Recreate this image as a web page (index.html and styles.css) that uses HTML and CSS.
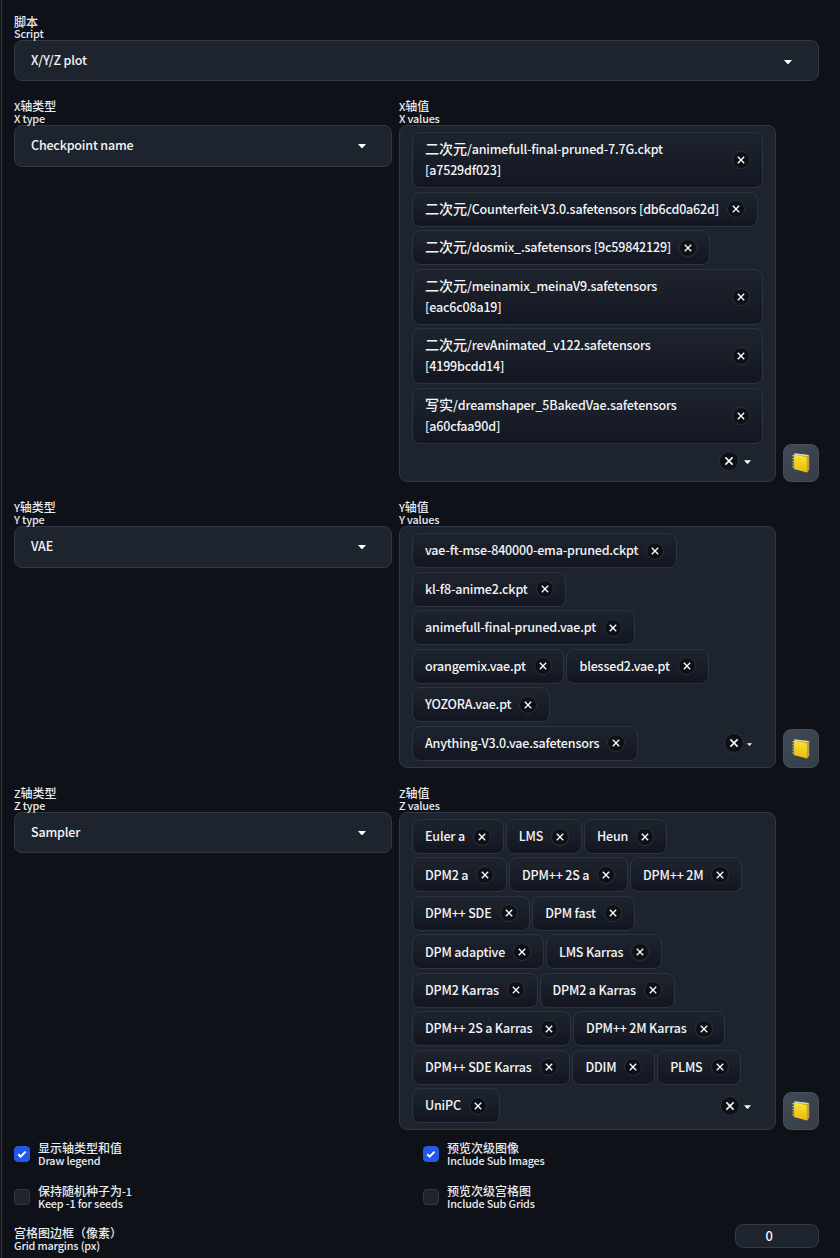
FILE: index.html
```html
<!DOCTYPE html>
<html lang="zh-CN">
<head>
<meta charset="utf-8">
<title>X/Y/Z plot</title>
<link rel="stylesheet" href="styles.css">
</head>
<body>
<svg class="defs" width="0" height="0" aria-hidden="true">
  <defs>
    <linearGradient id="cover" x1="0" y1="0" x2="0" y2="1"><stop offset="0" stop-color="#fbe632"/><stop offset="1" stop-color="#e6b80e"/></linearGradient>
    <symbol id="x" viewBox="0 0 18 18"><path d="M5.4 5.4l7.2 7.2M12.6 5.4l-7.2 7.2" fill="none" stroke="#fff" stroke-width="1.5"/></symbol>
    <symbol id="caret" viewBox="0 0 8 4"><path d="M0 0h8L4.7 3.7q-.7.6-1.4 0z" fill="#fff"/></symbol>
    <symbol id="book" viewBox="0 0 20 22">
      <path d="M4 1.5l14.2 1.7v14.6l-2.8 3z" fill="#a88a1c"/>
      <path d="M3.5 1.2l14.6 1.9-.9 1.5-14-1.9z" fill="#d0d3c6"/>
      <path d="M16 4.4l2.1-1.2v14.6l-2.2 2.6z" fill="#b9a150"/>
      <path d="M2.7 2.6l13.2 2.3v15.6L2.7 16.9z" fill="url(#cover)"/>
      <path d="M1 3.6h2.6M1 6.4h2.6M1 9.2h2.6M1 12h2.6M1 14.8h2.6" stroke="#a5a68c" stroke-width="1" fill="none"/>
    </symbol>
  </defs>
</svg>
<main class="panel">
  <section class="field script">
    <div class="label"><span><b>脚本</b></span><span>Script</span></div>
    <div class="select">X/Y/Z plot<svg class="caret"><use href="#caret"/></svg></div>
  </section>

  <section class="axis axis-x">
    <div class="field">
      <div class="label"><span>X<b>轴类型</b></span><span>X type</span></div>
      <div class="select">Checkpoint name<svg class="caret"><use href="#caret"/></svg></div>
    </div>
    <div class="field">
      <div class="label"><span>X<b>轴值</b></span><span>X values</span></div>
      <div class="values">
        <div class="row"><div class="chip wide"><span><b>二次元</b>/animefull-final-pruned-7.7G.ckpt<br>[a7529df023]</span><svg class="x"><use href="#x"/></svg></div></div>
        <div class="row"><div class="chip"><span><b>二次元</b>/Counterfeit-V3.0.safetensors [db6cd0a62d]</span><svg class="x"><use href="#x"/></svg></div></div>
        <div class="row"><div class="chip"><span><b>二次元</b>/dosmix_.safetensors [9c59842129]</span><svg class="x"><use href="#x"/></svg></div></div>
        <div class="row"><div class="chip wide"><span><b>二次元</b>/meinamix_meinaV9.safetensors<br>[eac6c08a19]</span><svg class="x"><use href="#x"/></svg></div></div>
        <div class="row"><div class="chip wide"><span><b>二次元</b>/revAnimated_v122.safetensors<br>[4199bcdd14]</span><svg class="x"><use href="#x"/></svg></div></div>
        <div class="row"><div class="chip wide"><span><b>写实</b>/dreamshaper_5BakedVae.safetensors<br>[a60cfaa90d]</span><svg class="x"><use href="#x"/></svg></div></div>
        <div class="row tail"><div class="controls"><svg class="x clear"><use href="#x"/></svg><svg class="caret"><use href="#caret"/></svg></div></div>
      </div>
    </div>
    <button class="fill"><svg class="book"><use href="#book"/></svg></button>
  </section>

  <section class="axis axis-y">
    <div class="field">
      <div class="label"><span>Y<b>轴类型</b></span><span>Y type</span></div>
      <div class="select">VAE<svg class="caret"><use href="#caret"/></svg></div>
    </div>
    <div class="field">
      <div class="label"><span>Y<b>轴值</b></span><span>Y values</span></div>
      <div class="values">
        <div class="row"><div class="chip">vae-ft-mse-840000-ema-pruned.ckpt<svg class="x"><use href="#x"/></svg></div></div>
        <div class="row"><div class="chip">kl-f8-anime2.ckpt<svg class="x"><use href="#x"/></svg></div></div>
        <div class="row"><div class="chip">animefull-final-pruned.vae.pt<svg class="x"><use href="#x"/></svg></div></div>
        <div class="row"><div class="chip">orangemix.vae.pt<svg class="x"><use href="#x"/></svg></div><div class="chip">blessed2.vae.pt<svg class="x"><use href="#x"/></svg></div></div>
        <div class="row"><div class="chip">YOZORA.vae.pt<svg class="x"><use href="#x"/></svg></div></div>
        <div class="row"><div class="chip">Anything-V3.0.vae.safetensors<svg class="x"><use href="#x"/></svg></div><div class="controls tight"><svg class="x clear"><use href="#x"/></svg><svg class="caret"><use href="#caret"/></svg></div></div>
      </div>
    </div>
    <button class="fill"><svg class="book"><use href="#book"/></svg></button>
  </section>

  <section class="axis axis-z">
    <div class="field">
      <div class="label"><span>Z<b>轴类型</b></span><span>Z type</span></div>
      <div class="select">Sampler<svg class="caret"><use href="#caret"/></svg></div>
    </div>
    <div class="field">
      <div class="label"><span>Z<b>轴值</b></span><span>Z values</span></div>
      <div class="values">
        <div class="row"><div class="chip">Euler a<svg class="x"><use href="#x"/></svg></div><div class="chip">LMS<svg class="x"><use href="#x"/></svg></div><div class="chip">Heun<svg class="x"><use href="#x"/></svg></div></div>
        <div class="row"><div class="chip">DPM2 a<svg class="x"><use href="#x"/></svg></div><div class="chip">DPM++ 2S a<svg class="x"><use href="#x"/></svg></div><div class="chip">DPM++ 2M<svg class="x"><use href="#x"/></svg></div></div>
        <div class="row"><div class="chip">DPM++ SDE<svg class="x"><use href="#x"/></svg></div><div class="chip">DPM fast<svg class="x"><use href="#x"/></svg></div></div>
        <div class="row"><div class="chip">DPM adaptive<svg class="x"><use href="#x"/></svg></div><div class="chip">LMS Karras<svg class="x"><use href="#x"/></svg></div></div>
        <div class="row"><div class="chip">DPM2 Karras<svg class="x"><use href="#x"/></svg></div><div class="chip">DPM2 a Karras<svg class="x"><use href="#x"/></svg></div></div>
        <div class="row"><div class="chip">DPM++ 2S a Karras<svg class="x"><use href="#x"/></svg></div><div class="chip">DPM++ 2M Karras<svg class="x"><use href="#x"/></svg></div></div>
        <div class="row"><div class="chip">DPM++ SDE Karras<svg class="x"><use href="#x"/></svg></div><div class="chip">DDIM<svg class="x"><use href="#x"/></svg></div><div class="chip">PLMS<svg class="x"><use href="#x"/></svg></div></div>
        <div class="row"><div class="chip">UniPC<svg class="x"><use href="#x"/></svg></div><div class="controls"><svg class="x clear"><use href="#x"/></svg><svg class="caret"><use href="#caret"/></svg></div></div>
      </div>
    </div>
    <button class="fill"><svg class="book"><use href="#book"/></svg></button>
  </section>

  <section class="checks">
    <div class="check"><span class="box on"><svg viewBox="0 0 16 16"><path d="M4.3 8.3l2.3 2.3 5-5" fill="none" stroke="#fff" stroke-width="2"/></svg></span><div class="label"><span><b>显示轴类型和值</b></span><span>Draw legend</span></div></div>
    <div class="check"><span class="box on"><svg viewBox="0 0 16 16"><path d="M4.3 8.3l2.3 2.3 5-5" fill="none" stroke="#fff" stroke-width="2"/></svg></span><div class="label"><span><b>预览次级图像</b></span><span>Include Sub Images</span></div></div>
    <div class="check"><span class="box"></span><div class="label"><span><b>保持随机种子为</b>-1</span><span>Keep -1 for seeds</span></div></div>
    <div class="check"><span class="box"></span><div class="label"><span><b>预览次级宫格图</b></span><span>Include Sub Grids</span></div></div>
  </section>

  <section class="margins">
    <div class="label"><span><b>宫格图边框（像素）</b></span><span>Grid margins (px)</span></div>
    <div class="number">0</div>
  </section>
</main>
</body>
</html>
```

FILE: styles.css
```css
* { box-sizing: border-box; }
body {
  margin: 0;
  background: #0e1118;
  color: #f3f4f6;
  font: 500 12.5px/21px "Noto Sans CJK SC", sans-serif;
  letter-spacing: -0.18px;
}
/* Chinese runs are set one step larger than the Latin text beside them. */
b { font-weight: 500; font-size: 14px; line-height: 1; letter-spacing: 0; }
.defs { display: block; }
.panel {
  height: 1258px;
  margin-left: 1px;
  padding: 16px 21px 0 12px;
  border-left: 1px solid #303744;
  overflow: hidden;
}
.label {
  display: flex;
  flex-direction: column;
  font-size: 10.8px;
  line-height: 12px;
  letter-spacing: -0.16px;
  color: #e9ebee;
  white-space: nowrap;
}
.label span { height: 12px; }
.label span:last-child { line-height: 10.5px; }
.margins .label span:last-child { line-height: 12px; }
.label b { font-size: 12px; line-height: 0; }
.label span:first-child { line-height: 13px; }
.axis .label span:first-child,
.check .label span:first-child { line-height: 11px; }
.script { height: 85px; }
.script .select { height: 41px; }
.select {
  display: flex;
  align-items: center;
  justify-content: space-between;
  height: 42px;
  padding: 0 25px 3.5px 16px;
  border: 1px solid #2f3846;
  border-radius: 8px;
  background: #1e242e;
}
.script .select { padding: 0 26px 1.5px 16px; }
.axis-z .select { height: 41px; padding-bottom: 1.5px; }
.caret { width: 8px; height: 4px; display: block; position: relative; top: 1px; }
.select .caret { margin-top: 1.5px; }
.axis-z .select .caret { top: 0; }
.axis {
  display: grid;
  grid-template-columns: 378px 377px 36px;
  column-gap: 7px;
}
.axis-x { height: 401px; }
.axis-y { height: 286px; }
.axis-z { height: 342px; }
.values {
  display: flex;
  flex-direction: column;
  gap: 3.5px;
  padding: 6px 12px;
  border: 1px solid #2f3846;
  border-radius: 8px;
  background: #1e242e;
}
.axis-x .values { height: 357px; }
.axis-y .values { height: 242px; }
.axis-z .values { height: 318px; gap: 3.45px; }
.row { display: flex; gap: 2px; align-items: center; }
.tail { height: 27px; }
.chip {
  display: flex;
  align-items: center;
  gap: 8px;
  height: 35px;
  padding: 0 11.8px 1.5px 12px;
  border: 1px solid #2b3442;
  border-radius: 8px;
  background: linear-gradient(#1e242e, #131621);
  white-space: nowrap;
}
.wide { width: 100%; height: 56px; justify-content: space-between; }
.x {
  flex: none;
  width: 18px;
  height: 18px;
  border: 1px solid #29313d;
  border-radius: 50%;
  background: #0d1015;
}
.chip .x { margin-top: 1.5px; }
.controls { display: flex; align-items: center; gap: 4px; margin: 0 12px 0 auto; }
.tail .controls { margin-right: 12.5px; gap: 4.5px; }
.controls .caret { width: 7px; }
.controls .clear { width: 20px; height: 20px; }
.tight { gap: 3px; margin-right: 11px; }
.controls.tight .caret { width: 5px; height: 3px; }
.fill {
  display: flex;
  align-items: center;
  justify-content: center;
  width: 36px;
  height: 38px;
  margin: 0;
  padding: 0;
  border: 1px solid #454e5b;
  border-radius: 8px;
  background: linear-gradient(135deg, #424a56, #343c48);
}
.axis-x .fill { margin-top: 343px; }
.axis-y .fill { margin-top: 227px; height: 39px; }
.axis-z .fill { margin-top: 304px; }
.book { width: 20px; height: 22px; }
.checks {
  display: grid;
  grid-template-columns: 409px 1fr;
  grid-template-rows: 43px 43px;
  height: 86px;
  padding-top: 13px;
}
.check { display: flex; align-items: flex-start; gap: 8px; }
.box {
  width: 16px;
  height: 16px;
  margin-top: 3px;
  border: 1px solid #303947;
  border-radius: 4px;
  background: #1e242e;
}
.box svg { display: block; width: 16px; height: 16px; margin: -1px; }
.on { border-color: #2359e8; background: #2359e8; }
.margins { display: flex; justify-content: space-between; padding-top: 11px; }
.number {
  width: 84px;
  height: 24px;
  margin-top: -3px;
  padding-right: 16px;
  border: 1px solid #303947;
  border-radius: 8px;
  background: #1e242e;
  text-align: center;
  font-size: 13px;
  line-height: 22px;
}
```
